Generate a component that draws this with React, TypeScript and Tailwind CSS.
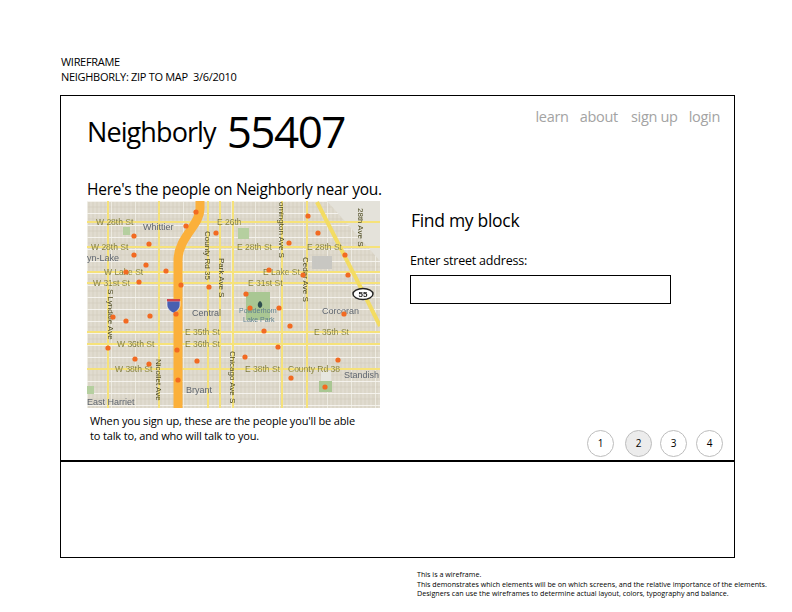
const font = { fontFamily: '"Open Sans", "Noto Sans", sans-serif' };
const mapFont = { fontFamily: '"Liberation Sans", sans-serif' };

const hRoads = [21, 46, 71, 82, 131, 143, 168];
const vRoads = [21, 72, 121, 133, 146, 195, 220];
const dots = [
  [109, 11], [99, 25], [47, 35], [62, 43], [47, 54], [59, 64], [39, 71], [79, 70], [52, 81], [94, 84], [122, 86], [129, 32],
  [221, 15], [231, 32], [202, 42], [258, 54], [182, 69], [216, 74], [261, 74], [159, 93],
  [26, 116], [39, 120], [63, 115], [89, 113], [21, 147], [90, 149], [48, 158], [62, 163], [110, 160], [91, 179],
  [163, 107], [192, 107], [257, 113], [203, 125], [177, 130], [191, 146], [158, 156], [251, 159], [204, 177], [238, 186],
];

const roadLabels: [string, number, number][] = [
  ['W 28th St', 9, 24], ['E 26th', 130, 24], ['W 28th St', 4, 49], ['E 28th St', 150, 49], ['E 28th St', 220, 49],
  ['W Lake St', 17, 74], ['E Lake St', 176, 74], ['W 31st St', 6, 85], ['E 31st St', 161, 85],
  ['E 35th St', 98, 134], ['E 35th St', 227, 134], ['W 36th St', 30, 146], ['E 36th St', 98, 146],
  ['W 38th St', 28, 171], ['E 38th St', 158, 171], ['County Rd 38', 201, 171],
];
const placeLabels: [string, number, number][] = [
  ['Whittier', 56, 29], ['yn-Lake', 0, 60], ['Central', 105, 115], ['Corcoran', 235, 113],
  ['Standish', 257, 177], ['Bryant', 99, 192], ['East Harriet', 0, 204],
];
const vLabels: [string, number, number][] = [
  ['County Rd 35', 121, 30], ['Park Ave S', 135, 57], ['omington Ave S', 195, 1], ['Cedar Ave S', 219, 56],
  ['28th Ave S', 274, 7], ['S Lyndale Ave', 24, 88], ['Nicollet Ave', 72, 158], ['Chicago Ave S', 146, 150],
];

function MapPicture() {
  return (
    <svg width="293" height="207" viewBox="0 0 293 207" className="block">
      <defs>
        <pattern id="blocks" width="24" height="12" patternUnits="userSpaceOnUse">
          <rect width="24" height="12" fill="#dbd6c8" />
          <path d="M4 0V12M8 0V12M12 0V12M16 0V12M20 0V12" stroke="#e5e1d6" strokeWidth="1" />
          <path d="M0 0H24" stroke="#fbfaf6" strokeWidth="1.6" />
          <path d="M0 6H24" stroke="#cfcabb" strokeWidth="0.6" />
          <path d="M0 0V12" stroke="#f6f4ee" strokeWidth="1.4" />
        </pattern>
        <filter id="soft">
          <feGaussianBlur stdDeviation="0.35" />
        </filter>
      </defs>
      <g filter="url(#soft)">
        <rect width="293" height="207" fill="url(#blocks)" />
        <rect x="159" y="91" width="24" height="28" fill="#a9c793" />
        <rect x="36" y="26" width="7" height="8" fill="#b5cf9f" />
        <rect x="151" y="27" width="11" height="11" fill="#b5cf9f" />
        <rect x="234" y="170" width="10" height="20" fill="#e6e6e0" />
        <rect x="232" y="180" width="13" height="11" fill="#a9c793" />
        <rect x="0" y="185" width="7" height="8" fill="#b5cf9f" />
        <rect x="225" y="55" width="20" height="13" fill="#c8c7c2" />
        <path d="M240 0L293 60V0Z" fill="#e4e2da" />
        {hRoads.map((y) => <rect key={y} x="0" y={y - 1} width="293" height="2" fill="#f6e27a" />)}
        {vRoads.map((x) => <rect key={x} x={x - 1} y="0" width="2" height="207" fill="#f6e27a" />)}
        <path d="M230 1L276 91L293 125" fill="none" stroke="#f3dc63" strokeWidth="4" />
        <path d="M113 0V8C113 24 92 36 91 58V207" fill="none" stroke="#fbb03b" strokeWidth="9" />
        {roadLabels.map(([t, x, y]) => (
          <text key={t + x} x={x} y={y} fontSize="8.5" fill="#4c4a20" stroke="#f5eda0" strokeWidth="0.2" style={mapFont}>{t}</text>
        ))}
        {placeLabels.map(([t, x, y]) => (
          <text key={t} x={x} y={y} fontSize="9" fill="#5f6670" style={mapFont}>{t}</text>
        ))}
        {vLabels.map(([t, x, y]) => (
          <text key={t} transform={`translate(${x - 3} ${y}) rotate(90)`} fontSize="8" fill="#4c4a20" style={mapFont}>{t}</text>
        ))}
        <text x="152" y="112" fontSize="7" fill="#5f7f8c" style={mapFont}>Powderhorn</text>
        <text x="156" y="121" fontSize="7" fill="#5f7f8c" style={mapFont}>Lake Park</text>
        <path d="M173 100c-3 2-3 6 0 7c3-1 3-5 0-7Z" fill="#2f4f4f" />
        <path d="M80 100H93V104C93 108 89 111 86.5 112C84 111 80 108 80 104Z" fill="#4a5fb0" stroke="#fff" strokeWidth="0.6" />
        <rect x="80" y="98" width="13" height="2.4" fill="#d0434b" />
        <ellipse cx="276" cy="93" rx="10" ry="5.5" fill="#fff" stroke="#222" strokeWidth="1.4" />
        <text x="276" y="96" textAnchor="middle" fontSize="8" fontWeight="700" fill="#222" style={mapFont}>55</text>
        {dots.map(([x, y]) => <circle key={`${x}-${y}`} cx={x} cy={y} r="2.6" fill="#f26b21" />)}
      </g>
    </svg>
  );
}

function Step({ n, active }: { n: number; active?: boolean }) {
  return (
    <div className={`flex size-[27px] items-center justify-center rounded-full border border-[#bdbdbd] text-[10px] text-black ${active ? 'bg-[#ececec]' : 'bg-white'}`}>
      {n}
    </div>
  );
}

export default function App() {
  return (
    <div className="h-[612px] w-[792px] overflow-hidden bg-white pl-[60px] pt-[54px] text-black" style={font}>
      <div className="pl-[1px] text-[11px] leading-[15px] tracking-[-0.3px]">
        <p>WIREFRAME</p>
        <p>NEIGHBORLY: ZIP TO MAP&nbsp; 3/6/2010</p>
      </div>

      <div className="mt-[11px] flex h-[463px] w-[675px] flex-col border border-black">
        <div className="flex h-[366px] flex-col border-b-2 border-black pl-[26px]">
          <div className="flex items-start justify-between pr-[14px]">
            <div className="flex items-start gap-[11px] pt-[11px]">
              <span className="text-[27px] leading-[50px] tracking-[-0.9px]">Neighborly</span>
              <span className="text-[44px] leading-[48px] tracking-[-1.5px]">55407</span>
            </div>
            <nav className="flex pt-[11px] text-[14.5px] leading-[20px] tracking-[-0.3px] text-[#a3a3a3]">
              <span>learn</span>
              <span className="ml-[11px]">about</span>
              <span className="ml-[13px]">sign up</span>
              <span className="ml-[11px]">login</span>
            </nav>
          </div>

          <div className="flex flex-1 pt-[22px]">
            <div className="w-[323px] shrink-0">
              <h2 className="mb-[2px] text-[15.5px] leading-[20px] tracking-[-0.25px]">Here's the people on Neighborly near you.</h2>
              <MapPicture />
              <p className="mt-[5px] pl-[3px] text-[11px] leading-[15px] tracking-[-0.15px]">
                When you sign up, these are the people you'll be able
                <br />
                to talk to, and who will talk to you.
              </p>
            </div>

            <div className="flex flex-1 flex-col pr-[11px]">
              <h3 className="mt-[29px] pl-[1px] text-[17.5px] leading-[24px] tracking-[-0.3px]">Find my block</h3>
              <label className="mt-[20px] text-[12.5px] leading-[18px] tracking-[-0.2px]">Enter street address:</label>
              <div className="mt-[5px] h-[29px] w-[261px] border border-black bg-white" />
              <div className="mt-auto flex items-center justify-end pb-[3px]">
                <Step n={1} />
                <div className="w-[11px]" />
                <Step n={2} active />
                <div className="w-[8px]" />
                <Step n={3} />
                <div className="w-[9px]" />
                <Step n={4} />
              </div>
            </div>
          </div>
        </div>
      </div>

      <div className="ml-[357px] mt-[12px] text-[7.15px] leading-[9.5px]">
        <p>This is a wireframe.</p>
        <p>This demonstrates which elements will be on which screens, and the relative importance of the elements.</p>
        <p>Designers can use the wireframes to determine actual layout, colors, typography and balance.</p>
      </div>
    </div>
  );
}
